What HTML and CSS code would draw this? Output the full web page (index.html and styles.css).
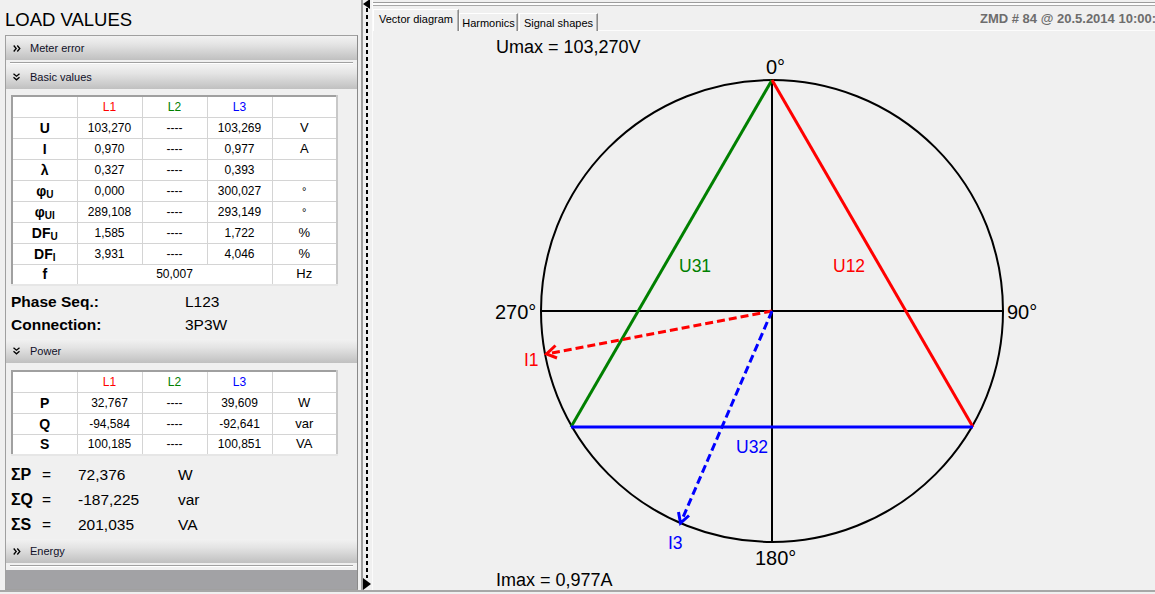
FILE: index.html
```html
<!DOCTYPE html>
<html>
<head>
<meta charset="utf-8">
<title>Load values</title>
<link rel="stylesheet" href="styles.css">
</head>
<body>
<div class="app">
  <div class="left">
    <h1 class="title">LOAD VALUES</h1>
    <div class="group">
      <div class="hdr">
        <svg class="chev" width="8" height="7" viewBox="0 0 8 7"><polyline points="0.7,0.5 3.2,3.5 0.7,6.5"/><polyline points="4.3,0.5 6.8,3.5 4.3,6.5"/></svg>
        <span>Meter error</span>
      </div>
      <div class="sep"></div>
      <div class="hdr">
        <svg class="chev" width="8" height="8" viewBox="0 0 8 8"><polyline points="0.5,0.7 3.5,3.2 6.5,0.7"/><polyline points="0.5,4.3 3.5,6.8 6.5,4.3"/></svg>
        <span>Basic values</span>
      </div>
      <div class="sect">
        <table class="grid">
          <tr><td class="lbl"></td><td class="l1">L1</td><td class="l2">L2</td><td class="l3">L3</td><td></td></tr>
          <tr><td class="lbl">U</td><td>103,270</td><td>----</td><td>103,269</td><td class="unit">V</td></tr>
          <tr><td class="lbl">I</td><td>0,970</td><td>----</td><td>0,977</td><td class="unit">A</td></tr>
          <tr><td class="lbl">λ</td><td>0,327</td><td>----</td><td>0,393</td><td class="unit"></td></tr>
          <tr><td class="lbl">φ<sub>U</sub></td><td>0,000</td><td>----</td><td>300,027</td><td class="unit deg">°</td></tr>
          <tr><td class="lbl">φ<sub>UI</sub></td><td>289,108</td><td>----</td><td>293,149</td><td class="unit deg">°</td></tr>
          <tr><td class="lbl">DF<sub>U</sub></td><td>1,585</td><td>----</td><td>1,722</td><td class="unit">%</td></tr>
          <tr><td class="lbl">DF<sub>I</sub></td><td>3,931</td><td>----</td><td>4,046</td><td class="unit">%</td></tr>
          <tr><td class="lbl">f</td><td colspan="3">50,007</td><td class="unit">Hz</td></tr>
        </table>
        <div class="info"><span class="k">Phase Seq.:</span><span class="v">L123</span></div>
        <div class="info"><span class="k">Connection:</span><span class="v">3P3W</span></div>
      </div>
      <div class="hdr hdr-power">
        <svg class="chev" width="8" height="8" viewBox="0 0 8 8"><polyline points="0.5,0.7 3.5,3.2 6.5,0.7"/><polyline points="0.5,4.3 3.5,6.8 6.5,4.3"/></svg>
        <span>Power</span>
      </div>
      <div class="sect">
        <table class="grid grid-power">
          <tr><td class="lbl"></td><td class="l1">L1</td><td class="l2">L2</td><td class="l3">L3</td><td></td></tr>
          <tr><td class="lbl">P</td><td>32,767</td><td>----</td><td>39,609</td><td class="unit">W</td></tr>
          <tr><td class="lbl">Q</td><td>-94,584</td><td>----</td><td>-92,641</td><td class="unit">var</td></tr>
          <tr><td class="lbl">S</td><td>100,185</td><td>----</td><td>100,851</td><td class="unit">VA</td></tr>
        </table>
        <div class="sums">
          <span class="sk">ΣP</span><span>=</span><span>72,376</span><span>W</span>
          <span class="sk">ΣQ</span><span>=</span><span>-187,225</span><span>var</span>
          <span class="sk">ΣS</span><span>=</span><span>201,035</span><span>VA</span>
        </div>
      </div>
      <div class="hdr hdr-energy">
        <svg class="chev" width="8" height="7" viewBox="0 0 8 7"><polyline points="0.7,0.5 3.2,3.5 0.7,6.5"/><polyline points="4.3,0.5 6.8,3.5 4.3,6.5"/></svg>
        <span>Energy</span>
      </div>
      <div class="sep"></div>
      <div class="fill"></div>
    </div>
  </div>

  <div class="splitter">
    <div class="dash"></div>
    <div class="arrow-left"></div>
    <div class="arrow-right"></div>
  </div>

  <div class="right">
    <div class="topline"></div>
    <div class="tabbar">
      <div class="tab tab-active tab-w1">Vector diagram</div>
      <div class="tab tab-w2">Harmonics</div>
      <div class="tab tab-w3">Signal shapes</div>
      <div class="stamp">ZMD # 84 @ 20.5.2014 10:00:00</div>
    </div>
    <div class="pane">
      <svg class="diagram" width="783" height="559" viewBox="372 31 783 559">
        <text class="big" x="495" y="53">Umax = 103,270V</text>
        <text class="big" x="495" y="586">Imax = 0,977A</text>

        <circle cx="771" cy="311" r="231" fill="none" stroke="#000" stroke-width="2"/>
        <line x1="771" y1="80" x2="771" y2="542" stroke="#000" stroke-width="2"/>
        <line x1="540" y1="311" x2="1002" y2="311" stroke="#000" stroke-width="2"/>

        <line x1="771" y1="80" x2="570" y2="427" stroke="#008000" stroke-width="3"/>
        <line x1="771" y1="80" x2="972" y2="427" stroke="#ff0000" stroke-width="3"/>
        <line x1="570" y1="427" x2="972" y2="427" stroke="#0000ff" stroke-width="3"/>

        <line x1="771" y1="311" x2="546" y2="354" stroke="#ff0000" stroke-width="3" stroke-dasharray="8 4"/>
        <polyline points="554.5,345.5 545.5,354 556,358" fill="none" stroke="#ff0000" stroke-width="3"/>
        <line x1="771" y1="311" x2="680" y2="522" stroke="#0000ff" stroke-width="3" stroke-dasharray="8 4"/>
        <polyline points="677.5,512 679.5,523 688,515.5" fill="none" stroke="#0000ff" stroke-width="3"/>

        <text class="deg" x="765" y="74">0°</text>
        <text class="deg" x="494" y="319">270°</text>
        <text class="deg" x="1006" y="319">90°</text>
        <text class="deg" x="754" y="565">180°</text>

        <text class="lab" x="678" y="272" fill="#008000">U31</text>
        <text class="lab" x="832" y="272" fill="#ff0000">U12</text>
        <text class="lab" x="735" y="453" fill="#0000ff">U32</text>
        <text class="lab" x="523" y="366" fill="#ff0000">I1</text>
        <text class="lab" x="667" y="549" fill="#0000ff">I3</text>
      </svg>
    </div>
  </div>
</div>
</body>
</html>
```

FILE: styles.css
```css
* { box-sizing: border-box; }
html, body { margin: 0; padding: 0; }
body {
  background: #f0f0f0;
  font-family: "Liberation Sans", Arial, sans-serif;
  color: #000;
  width: 1155px;
  height: 594px;
  overflow: hidden;
}
.app {
  display: flex;
  height: 592px;
  border-bottom: 2px solid #a7a7a7;
}

/* ---------- left panel ---------- */
.left {
  width: 363px;
  flex: 0 0 363px;
  border-right: 2px solid #a0a0a0;
  display: flex;
  flex-direction: column;
}
.title {
  margin: 0;
  height: 35px;
  padding: 9px 0 0 5px;
  font-size: 18.5px;
  line-height: 22px;
  font-weight: normal;
  color: #000;
}
.group {
  flex: 1;
  margin: 0 3px 0 5px;
  border: 1px solid #a0a0a0;
  border-right-color: #8a8a8a;
  display: flex;
  flex-direction: column;
}
.hdr {
  height: 24px;
  flex: 0 0 24px;
  display: flex;
  align-items: center;
  gap: 9px;
  padding-left: 7px;
  font-size: 11px;
  color: #101028;
  background: linear-gradient(#f2f2f2 0%, #e4e4e4 35%, #c0c0c0 100%);
}
.chev polyline { fill: none; stroke: #000; stroke-width: 1.3; }
.sep {
  flex: 0 0 2px;
  height: 2px;
  margin: 2px 4px 1px 4px;
  border-top: 1px solid #a0a0a0;
  border-bottom: 1px solid #ffffff;
}
.sect { padding-left: 5px; }
.grid {
  margin-top: 6px;
  width: 327px;
  border-collapse: collapse;
  background: #fff;
  border: 2px solid #a0a0a0;
  border-right-color: #c8c8c8;
  border-bottom-color: #e6e6e6;
  table-layout: fixed;
  font-size: 12px;
}
.grid td {
  height: 21px;
  padding: 0;
  text-align: center;
  border: 1px solid #d4d4d4;
  width: 65px;
  line-height: 14px;
}
.grid td.lbl {
  font-weight: bold;
  font-size: 14px;
}
.grid td.lbl sub {
  font-size: 10px;
  vertical-align: -2px;
  line-height: 0;
}
.grid td.unit { font-size: 13px; }
.grid td.deg { font-size: 11px; vertical-align: top; padding-top: 3px; }
.l1 { color: #ff0000; }
.l2 { color: #008000; }
.l3 { color: #0000ff; }
.grid-power { margin-top: 7px; }

.info {
  display: flex;
  height: 23px;
  align-items: center;
  font-size: 15.5px;
}
.info:first-of-type { margin-top: 4px; }
.info .k { width: 174px; font-weight: bold; }
.hdr-power { margin-top: 3px; }

.sums {
  margin-top: 6px;
  display: grid;
  grid-template-columns: 31px 36px 100px auto;
  grid-auto-rows: 25px;
  align-items: center;
  font-size: 15.5px;
}
.sums .sk { font-weight: bold; font-size: 16px; }
.hdr-energy { margin-top: 2px; }
.fill {
  flex: 1;
  background: #a2a2a5;
  margin-top: 2px;
}

/* ---------- splitter ---------- */
.splitter {
  position: relative;
  width: 9px;
  flex: 0 0 9px;
}
.dash {
  margin: 8px 0 0 3px;
  width: 2px;
  height: 570px;
  background: repeating-linear-gradient(to bottom, #000 0 4px, transparent 4px 7px);
}
.arrow-left {
  position: absolute;
  left: 0;
  top: -1px;
  width: 0; height: 0;
  border-top: 5px solid transparent;
  border-bottom: 5px solid transparent;
  border-right: 7px solid #000;
}
.arrow-right {
  position: absolute;
  left: 0;
  top: 578px;
  width: 0; height: 0;
  border-top: 6px solid transparent;
  border-bottom: 6px solid transparent;
  border-left: 8px solid #000;
}

/* ---------- right panel ---------- */
.right {
  flex: 1;
  display: flex;
  flex-direction: column;
  min-width: 0;
  border-left: 1px solid #fbfbfb;
}
.topline {
  margin-top: 2px;
  height: 4px;
  border-top: 1px solid #9c9c9c;
  border-bottom: 1px solid #a8a8a8;
  background: #fdfdfd;
}
.tabbar {
  height: 25px;
  display: flex;
  align-items: flex-end;
  border-bottom: 1px solid #fcfcfc;
}
.tab {
  height: 18px;
  font-size: 11px;
  line-height: 13px;
  padding-top: 3px;
  text-align: center;
  white-space: nowrap;
  border-top: 1px solid #ffffff;
  border-left: 1px solid #ffffff;
  border-right: 1px solid #8a8a8a;
  box-shadow: inset -1px 0 0 #b4b4b4;
  background: #f0f0f0;
  margin-bottom: -1px;
}
.tab-active {
  height: 22px;
  position: relative;
  z-index: 1;
}
.tab-w1 { width: 86px; }
.tab-w2 { width: 59px; }
.tab-w3 { width: 79px; margin-left: 1px; }
.stamp {
  margin-left: auto;
  align-self: center;
  width: 175px;
  overflow: hidden;
  white-space: nowrap;
  font-size: 13px;
  font-weight: bold;
  color: #6d6d6d;
}
.pane {
  flex: 1;
  overflow: hidden;
}
.diagram { display: block; }
.diagram text { font-family: "Liberation Sans", Arial, sans-serif; }
.diagram .big { font-size: 18px; fill: #000; }
.diagram .deg { font-size: 20px; fill: #000; }
.diagram .lab { font-size: 17.5px; }
```
